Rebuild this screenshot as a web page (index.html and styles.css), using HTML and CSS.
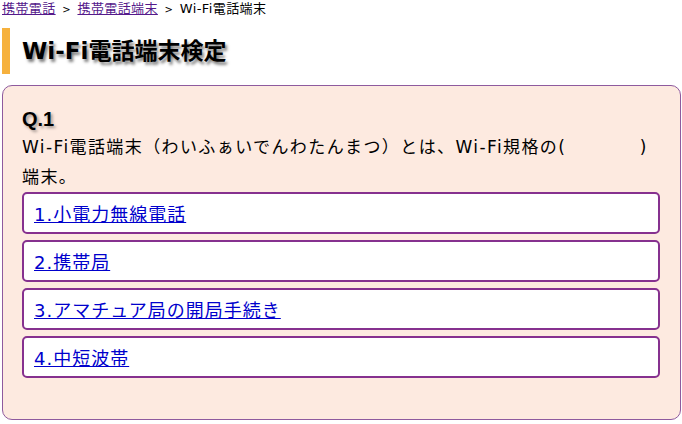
FILE: index.html
```html
<!DOCTYPE html>
<html lang="ja">
<head>
    <meta charset="UTF-8">
    <title>Wi-Fi電話端末検定</title>
    <link rel="stylesheet" href="styles.css">
</head>
<body>
    <div class="breadcrumb">
        <a href="#">携帯電話</a> <span class="sep">&gt;</span>
        <a href="#">携帯電話端末</a> <span class="sep">&gt;</span>
        Wi-Fi電話端末
    </div>

    <h1 class="title">Wi-Fi電話端末検定</h1>

    <div class="quiz">
        <h2 class="quiz-no">Q.1</h2>
        <p class="question">Wi-Fi電話端末（わいふぁいでんわたんまつ）とは、Wi-Fi規格の(　　　　)<br>端末。</p>
        <ul class="choices">
            <li><a href="#">1.小電力無線電話</a></li>
            <li><a href="#">2.携帯局</a></li>
            <li><a href="#">3.アマチュア局の開局手続き</a></li>
            <li><a href="#">4.中短波帯</a></li>
        </ul>
    </div>
</body>
</html>
```

FILE: styles.css
```css
body {
    margin: 0;
    font-family: "DejaVu Sans", "Noto Sans CJK JP", sans-serif;
    font-size: 13px;
    color: #000;
    background: #fff;
}

.breadcrumb {
    padding: 1px 2px;
    height: 18px;
    line-height: 16px;
    letter-spacing: 0.4px;
}

.breadcrumb a {
    color: #551a8b;
}

.breadcrumb .sep {
    font-size: 10px;
    margin: 0 2px;
}

.title {
    margin: 8px 0 0 2px;
    height: 46px;
    line-height: 46px;
    border-left: 8px solid #f6b13d;
    padding-left: 12px;
    font-size: 23px;
    font-weight: bold;
    text-shadow: 2px 3px 3px rgba(0, 0, 0, 0.5);
}

.quiz {
    margin: 11px 1px 0 2px;
    border: 1px solid #8e5a9e;
    border-radius: 10px;
    background: #fdeae0;
    padding: 21px 20px 39px 19px;
    height: 335px;
    box-sizing: border-box;
}

.quiz-no {
    margin: 0;
    font-family: "Liberation Sans", "Noto Sans CJK JP", sans-serif;
    font-size: 20px;
    line-height: 24px;
    font-weight: bold;
    text-shadow: 2px 2px 3px rgba(0, 0, 0, 0.35);
}

.question {
    margin: 1px 0 0;
    font-size: 17px;
    line-height: 30px;
    letter-spacing: 1.4px;
}

.choices {
    list-style: none;
    margin: 0;
    padding: 0;
    display: flex;
    flex-direction: column;
    gap: 6px;
}

.choices li {
    height: 42px;
    box-sizing: border-box;
    border: 2px solid #86318f;
    border-radius: 5px;
    background: #fff;
    padding: 0 10px;
    display: flex;
    align-items: center;
}

.choices a {
    color: #0000cc;
    font-size: 18px;
    letter-spacing: 1px;
}
```
